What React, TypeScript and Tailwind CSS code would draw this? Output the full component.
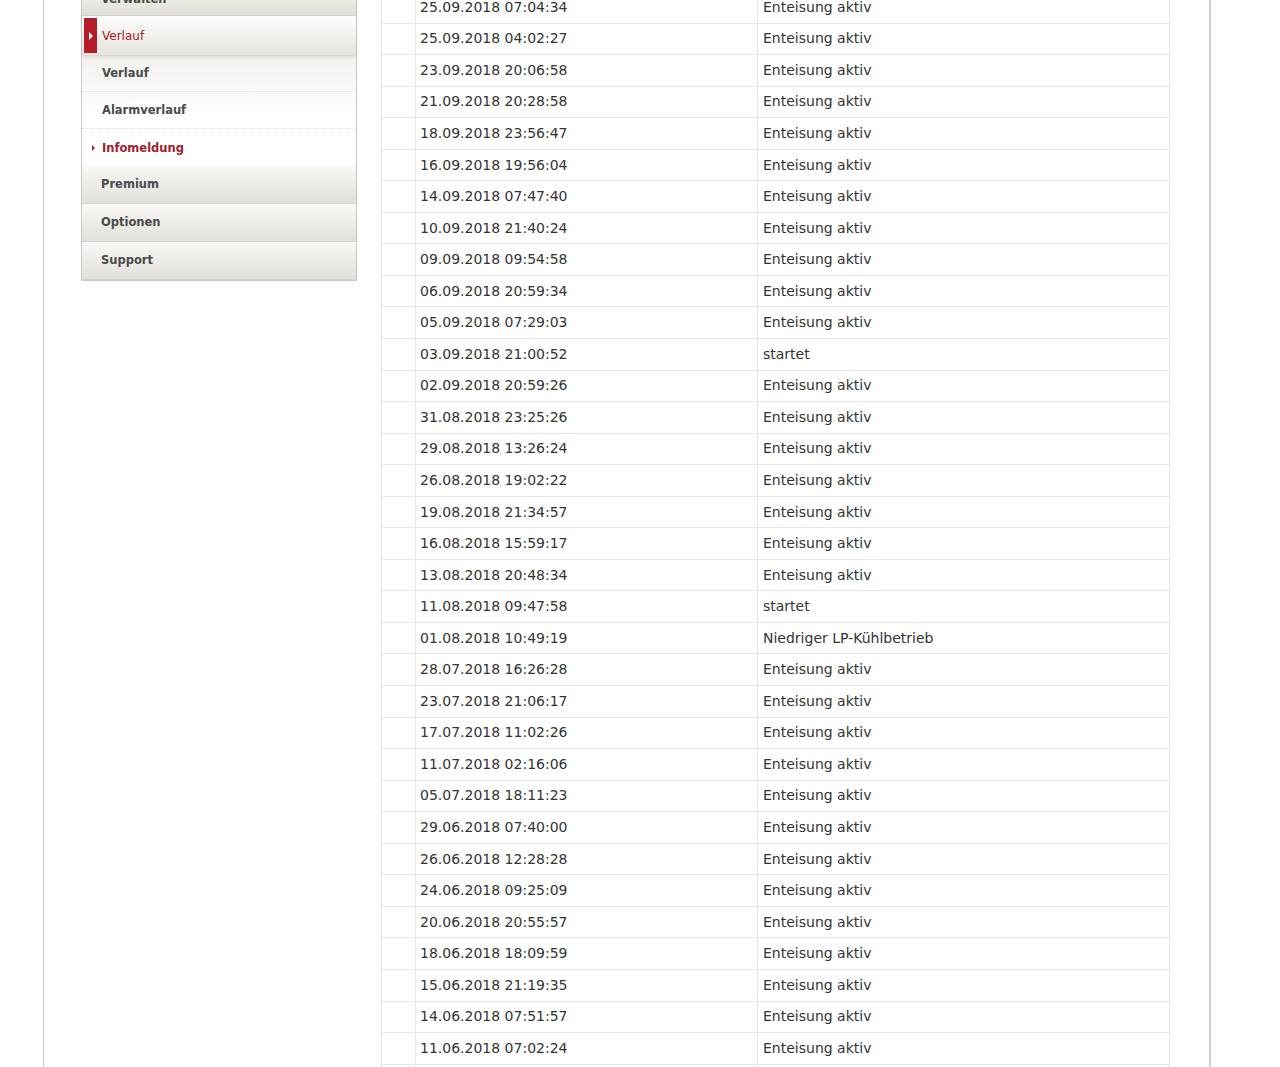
import React from 'react'

const rows: [string, string][] = [
  ['25.09.2018 07:04:34', 'Enteisung aktiv'],
  ['25.09.2018 04:02:27', 'Enteisung aktiv'],
  ['23.09.2018 20:06:58', 'Enteisung aktiv'],
  ['21.09.2018 20:28:58', 'Enteisung aktiv'],
  ['18.09.2018 23:56:47', 'Enteisung aktiv'],
  ['16.09.2018 19:56:04', 'Enteisung aktiv'],
  ['14.09.2018 07:47:40', 'Enteisung aktiv'],
  ['10.09.2018 21:40:24', 'Enteisung aktiv'],
  ['09.09.2018 09:54:58', 'Enteisung aktiv'],
  ['06.09.2018 20:59:34', 'Enteisung aktiv'],
  ['05.09.2018 07:29:03', 'Enteisung aktiv'],
  ['03.09.2018 21:00:52', 'startet'],
  ['02.09.2018 20:59:26', 'Enteisung aktiv'],
  ['31.08.2018 23:25:26', 'Enteisung aktiv'],
  ['29.08.2018 13:26:24', 'Enteisung aktiv'],
  ['26.08.2018 19:02:22', 'Enteisung aktiv'],
  ['19.08.2018 21:34:57', 'Enteisung aktiv'],
  ['16.08.2018 15:59:17', 'Enteisung aktiv'],
  ['13.08.2018 20:48:34', 'Enteisung aktiv'],
  ['11.08.2018 09:47:58', 'startet'],
  ['01.08.2018 10:49:19', 'Niedriger LP-Kühlbetrieb'],
  ['28.07.2018 16:26:28', 'Enteisung aktiv'],
  ['23.07.2018 21:06:17', 'Enteisung aktiv'],
  ['17.07.2018 11:02:26', 'Enteisung aktiv'],
  ['11.07.2018 02:16:06', 'Enteisung aktiv'],
  ['05.07.2018 18:11:23', 'Enteisung aktiv'],
  ['29.06.2018 07:40:00', 'Enteisung aktiv'],
  ['26.06.2018 12:28:28', 'Enteisung aktiv'],
  ['24.06.2018 09:25:09', 'Enteisung aktiv'],
  ['20.06.2018 20:55:57', 'Enteisung aktiv'],
  ['18.06.2018 18:09:59', 'Enteisung aktiv'],
  ['15.06.2018 21:19:35', 'Enteisung aktiv'],
  ['14.06.2018 07:51:57', 'Enteisung aktiv'],
  ['11.06.2018 07:02:24', 'Enteisung aktiv'],
  ['08.06.2018 19:44:12', 'Enteisung aktiv'],
]

const mainItem =
  'h-[38px] flex items-center pl-[19px] text-[11.5px] font-bold text-[#4a4a4a] bg-gradient-to-b from-[#f8f7f4] to-[#e2e0d9] border-t border-t-white border-b border-b-[#d2d0c8]'

const subItem =
  'h-[37px] flex items-center pl-[20px] text-[11.5px] font-bold text-[#4a4a4a] border-b border-dotted border-b-[#dcdcdc]'

function Sidebar() {
  return (
    <div className="w-[276px] -mt-[22px] border-x border-[#c9c9c9] border-b border-b-[#c9c9c9] shrink-0">
      <div className={mainItem + ' pt-[6px]'}>Verwalten</div>
      <div className="relative h-[39px] flex items-center pl-[20px] text-[12px] text-[#a3202c] bg-gradient-to-b from-[#fdfdfc] to-[#e6e4dd] shadow-[0_2px_3px_rgba(0,0,0,0.12)] z-10">
        <div className="absolute left-[2px] top-[2px] bottom-[2px] w-[13px] bg-[#b51c2a] flex items-center justify-center">
          <span className="block w-0 h-0 border-y-[4px] border-y-transparent border-l-[4px] border-l-white ml-[1px]" />
        </div>
        Verlauf
      </div>
      <div className="bg-gradient-to-b from-[#f1f0ec] via-white to-white">
        <div className={subItem + ' pt-[2px]'}>Verlauf</div>
        <div className={subItem + ' pt-[2px]'}>Alarmverlauf</div>
        <div className="h-[37px] flex items-center pl-[10px] pt-[2px] text-[11.5px] font-bold text-[#a3202c]">
          <span className="block w-0 h-0 border-y-[3px] border-y-transparent border-l-[3px] border-l-[#a3202c] mr-[7px] -mt-[2px]" />
          Infomeldung
        </div>
      </div>
      <div className={mainItem}>Premium</div>
      <div className={mainItem}>Optionen</div>
      <div className={mainItem}>Support</div>
    </div>
  )
}

function HistoryTable() {
  return (
    <div className="w-[789px] -mt-[8px] border-x border-[#e6e6e6] shrink-0">
      {rows.map(([time, text], i) => (
        <div
          key={i}
          className="grid grid-cols-[33px_342px_1fr] h-[31.55px] border-b border-[#e6e6e6] text-[14px] text-[#333]"
        >
          <div />
          <div className="border-l border-[#e6e6e6] pl-[4px] flex items-center">{time}</div>
          <div className="border-l border-[#e6e6e6] pl-[5px] flex items-center">{text}</div>
        </div>
      ))}
    </div>
  )
}

export default function App() {
  return (
    <div
      className="w-[1280px] h-[1067px] overflow-hidden bg-white"
      style={{ fontFamily: '"DejaVu Sans", Verdana, sans-serif' }}
    >
      <div className="ml-[43px] w-[1168px] h-full border-l border-[#c8c8c8] border-r-2 border-r-[#cfcfcf] flex items-start">
        <div className="ml-[37px] flex items-start gap-[24px]">
          <Sidebar />
          <HistoryTable />
        </div>
      </div>
    </div>
  )
}
